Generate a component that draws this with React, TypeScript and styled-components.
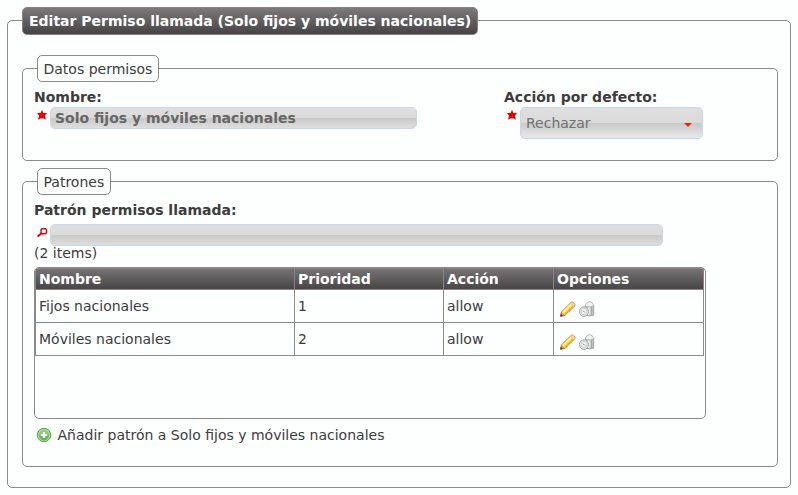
import React from "react";
import styled, { createGlobalStyle } from "styled-components";

const Global = createGlobalStyle`
  *, *::before, *::after { box-sizing: border-box; }
  body {
    margin: 0;
    background: #fdfefe;
    color: #3c3c3c;
    font: 14px/17px "DejaVu Sans", Verdana, sans-serif;
    overflow: hidden;
  }
`;

const Page = styled.main`
  padding: 7px 7px 0;
  width: 798px;
  height: 495px;
`;

const Frame = styled.fieldset<{ $height: number; $inset: number }>`
  margin: 0;
  min-width: 0;
  height: ${(p) => p.$height}px;
  padding: 0 ${(p) => p.$inset}px;
  border: 1px solid #8b8b8b;
  border-radius: 5px;
`;

const OuterFrame = styled(Frame)`
  width: 784px;
  padding-right: 12px;
`;

const Title = styled.legend`
  height: 27px;
  margin-bottom: 21px;
  padding: 0;
`;

const TitleText = styled.span`
  display: block;
  height: 28px;
  padding: 0 5.5px 0 6px;
  border: 1px solid #8c7f81;
  border-radius: 5px;
  background: linear-gradient(#7c7a7b, #464344);
  color: #fff;
  font-weight: bold;
  line-height: 26px;
  white-space: nowrap;
`;

const SectionTitle = styled.legend`
  height: 27px;
  margin-left: 3px;
  padding: 0 5.5px;
  border: 1px solid #8b8b8b;
  border-radius: 5px;
  background: #fdfefe;
  line-height: 27px;
`;

const Sections = styled.div`
  display: flex;
  flex-direction: column;
  gap: 7px;
`;

const FieldRow = styled.div`
  display: grid;
  grid-template-columns: 470px 1fr;
  padding-top: 7px;
`;

const Label = styled.label`
  display: block;
  height: 18px;
  font-weight: bold;
`;

const Control = styled.div`
  display: flex;
  align-items: flex-start;
`;

const Marker = styled.span<{ $top: number }>`
  display: flex;
  flex: 0 0 16px;
  padding: ${(p) => p.$top}px 0 0 3px;
`;

const TextInput = styled.input<{ $width: number }>`
  width: ${(p) => p.$width}px;
  height: 22px;
  padding: 0 4px;
  border: 1px solid #c3d9ec;
  border-radius: 5px;
  outline: none;
  background: linear-gradient(#dfdfdf 0, #dadada 50%, #c8c8c8 50%, #dedede 100%);
  color: #666;
  font: bold 14px "DejaVu Sans", sans-serif;
`;

const SelectBox = styled.div`
  display: flex;
  align-items: center;
  justify-content: space-between;
  width: 183px;
  height: 32px;
  padding: 0 10px 0 5px;
  border: 1px solid #c3d9ec;
  border-radius: 5px;
  background: linear-gradient(#dfdfdf 0, #dadada 50%, #c8c8c8 50%, #e8e8e8 100%);
  color: #707070;
`;

const Caret = styled.svg`
  margin-top: 4px;
`;

const SearchBlock = styled.div`
  padding-top: 7px;
  ${Label} { height: 22px; }
`;

const Count = styled.div`
  height: 21px;
  line-height: 15px;
`;

const TableBox = styled.div`
  width: 672px;
  height: 152px;
  border: 1px solid #8b8b8b;
  border-radius: 5px;
  overflow: hidden;
`;

const Table = styled.table`
  width: 669px;
  table-layout: fixed;
  border-collapse: collapse;
`;

const HeadRow = styled.tr`
  height: 21px;
  background: linear-gradient(#757374, #464344);
`;

const HeadCell = styled.th<{ $width: number }>`
  width: ${(p) => p.$width}px;
  padding: 0 3px;
  border: 1px solid #8d8182;
  color: #fff;
  line-height: 19px;
  text-align: left;
`;

const Row = styled.tr`
  height: 33px;
`;

const Cell = styled.td`
  padding: 0 3px;
  border: 1px solid #8b8b8b;
`;

const Actions = styled.div`
  display: flex;
  gap: 3px;
  padding: 6px 0 0 3px;
`;

const AddLink = styled.div`
  display: flex;
  align-items: center;
  gap: 5.5px;
  padding: 8px 0 0 2px;

  svg { margin-top: -1px; }
`;

const Star = () => (
  <svg width="10" height="10" viewBox="0 0 10 10">
    <path d="M5 0 6.5 3H10L7.9 5.7 9 9.5 5 8 1 9.5 2.1 5.7 0 3h3.5z" fill="#e80000" />
  </svg>
);

const Search = () => (
  <svg width="11" height="10" viewBox="0 0 11 10" fill="none" stroke="#e30000">
    <path d="M4 1.7 5 .8h3.5l1 1v3l-1 1H5l-1-1z" strokeWidth="1.4" fill="#fff" />
    <path d="M4.3 5.5.6 8.6" strokeWidth="2" />
  </svg>
);

const Pencil = () => (
  <svg width="16" height="16" viewBox="0 0 16 16">
    <path d="M.5 15.2 1.3 11 11 1.3Q12.6.3 14.2 1.9T14.8 5L5 14.4z" fill="#f8cf4c" stroke="#c58a3a" strokeWidth=".8" />
    <path d="M3 11.6 11.7 3" stroke="#fff4a8" strokeWidth="1.8" />
    <path d="m4.8 13.4 8.6-8.3" stroke="#e8a52c" strokeWidth="1.1" />
    <path d="m10.8 2.2.8-.7Q13 .8 14.2 2t.2 2.7l-.8.8z" fill="#f8d6b5" stroke="#dba67f" strokeWidth=".6" />
    <path d="m.8 15 .6-3.3 3 2.8z" fill="#e8bd83" stroke="#a6672b" strokeWidth=".6" />
    <path d="m.3 15.5.5-2.6 2.2 2z" fill="#3e2411" />
  </svg>
);

const Trash = () => (
  <svg width="16" height="16" viewBox="0 0 16 16">
    <path d="M6.5 5h8.2v9.2q-4 1.5-8.2 0z" fill="#cfcfcf" stroke="#8f8f8f" strokeWidth=".8" />
    <path d="M9.8 6v8" stroke="#f0f0f0" strokeWidth="1.6" />
    <path d="M12.7 6v8" stroke="#a3a3a3" strokeWidth="1.2" />
    <path d="M6 5.3 7.2 2.4 10 .6l3 .8 2 3.8q-4.2 1.4-9 .1z" fill="#f1f1f1" stroke="#aaa" strokeWidth=".8" />
    <ellipse cx="5" cy="10.6" rx="4.5" ry="4.9" fill="#e4e4e4" stroke="#999" strokeWidth=".8" />
    <ellipse cx="5" cy="10.5" rx="2.9" ry="3.2" fill="#f4f4f4" stroke="#c4c4c4" strokeWidth=".7" />
    <path d="m3.6 9.8 2.7 1.6" stroke="#999" strokeWidth=".9" />
  </svg>
);

const AddIcon = () => (
  <svg width="16" height="16" viewBox="0 0 16 16">
    <defs>
      <linearGradient id="add" x2="0" y2="1">
        <stop stopColor="#9bd486" />
        <stop offset="1" stopColor="#5bb54c" />
      </linearGradient>
    </defs>
    <circle cx="8" cy="8" r="6.7" fill="#b9e0ac" stroke="#46933d" strokeWidth=".9" />
    <circle cx="8" cy="8" r="5.4" fill="url(#add)" />
    <path d="M8 4.9v6.2M4.9 8h6.2" stroke="#fff" strokeWidth="2.1" />
  </svg>
);

const columns = [
  { name: "Nombre", width: 259 },
  { name: "Prioridad", width: 149 },
  { name: "Acción", width: 110 },
  { name: "Opciones", width: 150 },
];

const patterns = [
  { name: "Fijos nacionales", priority: 1, action: "allow" },
  { name: "Móviles nacionales", priority: 2, action: "allow" },
];

export default function App() {
  return (
    <>
      <Global />
      <Page>
        <OuterFrame $height={481} $inset={14}>
          <Title>
            <TitleText>Editar Permiso llamada (Solo fijos y móviles nacionales)</TitleText>
          </Title>
          <Sections>
            <Frame $height={106} $inset={11}>
              <SectionTitle>Datos permisos</SectionTitle>
              <FieldRow>
                <div>
                  <Label htmlFor="name">Nombre:</Label>
                  <Control>
                    <Marker $top={3}><Star /></Marker>
                    <TextInput id="name" $width={367} defaultValue="Solo fijos y móviles nacionales" />
                  </Control>
                </div>
                <div>
                  <Label>Acción por defecto:</Label>
                  <Control>
                    <Marker $top={3}><Star /></Marker>
                    <SelectBox>
                      <span>Rechazar</span>
                      <Caret width="8" height="4" viewBox="0 0 8 4"><path d="M0 0h8L4 4z" fill="#ed2407" /></Caret>
                    </SelectBox>
                  </Control>
                </div>
              </FieldRow>
            </Frame>
            <Frame $height={299} $inset={11}>
              <SectionTitle>Patrones</SectionTitle>
              <SearchBlock>
                <Label htmlFor="pattern">Patrón permisos llamada:</Label>
                <Control>
                  <Marker $top={4}><Search /></Marker>
                  <TextInput id="pattern" $width={613} />
                </Control>
              </SearchBlock>
              <Count>(2 items)</Count>
              <TableBox>
                <Table>
                  <thead>
                    <HeadRow>
                      {columns.map((c) => <HeadCell key={c.name} $width={c.width}>{c.name}</HeadCell>)}
                    </HeadRow>
                  </thead>
                  <tbody>
                    {patterns.map((p) => (
                      <Row key={p.name}>
                        <Cell>{p.name}</Cell>
                        <Cell>{p.priority}</Cell>
                        <Cell>{p.action}</Cell>
                        <Cell><Actions><Pencil /><Trash /></Actions></Cell>
                      </Row>
                    ))}
                  </tbody>
                </Table>
              </TableBox>
              <AddLink><AddIcon />Añadir patrón a Solo fijos y móviles nacionales</AddLink>
            </Frame>
          </Sections>
        </OuterFrame>
      </Page>
    </>
  );
}
